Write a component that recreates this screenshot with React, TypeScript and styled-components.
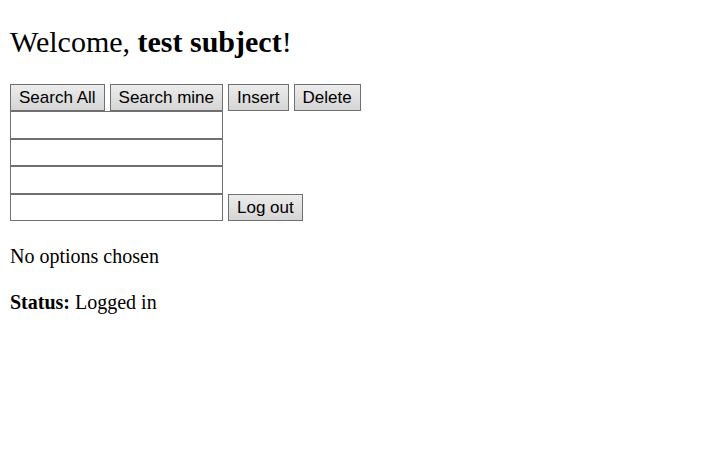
import React from "react";
import styled, { createGlobalStyle } from "styled-components";

const GlobalStyle = createGlobalStyle`
  body {
    margin: 0;
    background: #fff;
    color: #000;
    font-family: "Liberation Serif", "Times New Roman", serif;
    font-size: 20px;
    line-height: 23px;
  }
`;

const Page = styled.main`
  padding: 24px 10px;
`;

const Welcome = styled.p`
  margin: 0 0 25px;
  font-size: 30px;
  line-height: 35px;
`;

const Controls = styled.form`
  display: flex;
  flex-direction: column;
  margin-bottom: 24px;
`;

const Row = styled.div`
  display: flex;
  gap: 5px;
  height: 27px;

  &:nth-child(even) {
    height: 28px;
  }
`;

const Button = styled.button`
  box-sizing: border-box;
  margin: 0;
  padding: 0 8px;
  border: 1px solid #707070;
  border-radius: 0;
  background: linear-gradient(#ececec, #d5d5d5);
  color: #000;
  font-family: "Liberation Sans", Arial, sans-serif;
  font-size: 17px;
  line-height: 20px;
  white-space: nowrap;
`;

const Field = styled.input`
  box-sizing: border-box;
  width: 213px;
  margin: 0;
  padding: 1px 2px;
  border: 1px solid #707070;
  border-radius: 0;
  background: #fff;
  font-family: "Liberation Sans", Arial, sans-serif;
  font-size: 17px;
`;

const Message = styled.p`
  margin: 0 0 23px;
`;

const actions = ["Search All", "Search mine", "Insert", "Delete"];
const fields = ["First value", "Second value", "Third value"];

export default function App() {
  return (
    <>
      <GlobalStyle />
      <Page>
        <Welcome>
          Welcome, <b>test subject</b>!
        </Welcome>
        <Controls onSubmit={(event) => event.preventDefault()}>
          <Row>
            {actions.map((action) => (
              <Button key={action} type="button">
                {action}
              </Button>
            ))}
          </Row>
          {fields.map((field) => (
            <Row key={field}>
              <Field type="text" aria-label={field} />
            </Row>
          ))}
          <Row>
            <Field type="text" aria-label="Fourth value" />
            <Button type="button">Log out</Button>
          </Row>
        </Controls>
        <Message>No options chosen</Message>
        <Message>
          <b>Status:</b> Logged in
        </Message>
      </Page>
    </>
  );
}
